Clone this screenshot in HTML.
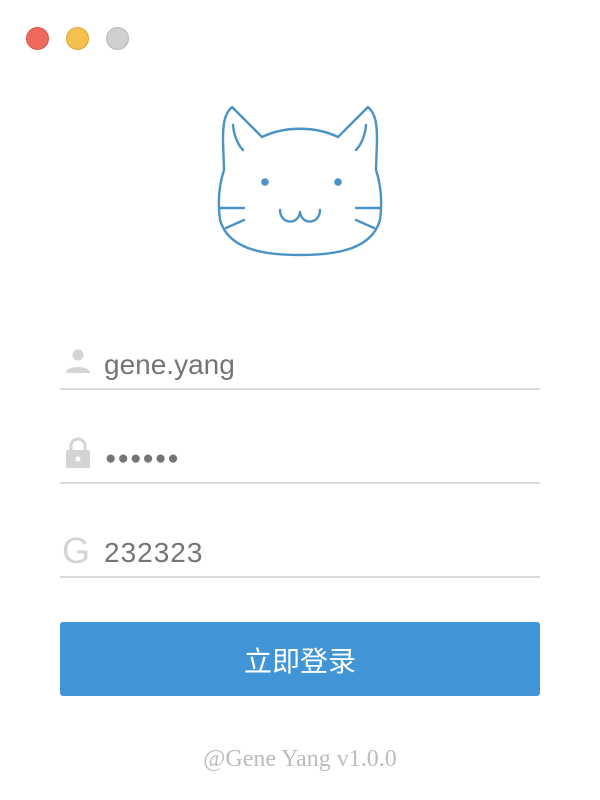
<!DOCTYPE html>
<html><head><meta charset="utf-8"><style>
html,body{margin:0;padding:0;background:#fff;}
body{width:600px;height:800px;position:relative;overflow:hidden;font-family:"Liberation Sans","Noto Sans CJK SC",sans-serif;}
.dot{position:absolute;top:27px;width:23px;height:23px;border-radius:50%;box-sizing:border-box;}
.field{position:absolute;left:60px;width:480px;border-bottom:2px solid #d9d9d9;height:40px;}
.field .t{position:absolute;left:44px;bottom:7px;font-size:28px;color:#757575;}
.btn{position:absolute;left:60px;top:622px;width:480px;height:74px;background:#4195d6;border-radius:3px;color:#fff;font-size:28px;text-align:center;line-height:80px;}
.foot{position:absolute;top:746px;width:600px;text-align:center;font-family:"Liberation Serif",serif;font-size:24px;color:#bcbcbc;}
</style></head><body>
<div class="dot" style="left:26px;background:#ee6a5f;border:1px solid #d65448"></div>
<div class="dot" style="left:66px;background:#f6c04f;border:1px solid #dca53a"></div>
<div class="dot" style="left:106px;background:#d0d0d0;border:1px solid #b9b9b9"></div>

<svg style="position:absolute;left:0;top:0" width="600" height="300" fill="none" stroke="#4a93c7" stroke-width="2.4" stroke-linecap="round" stroke-linejoin="round">
<path d="M262,137 L232,107 C224,114 223,125 223,140 L224,170 C218,188 218,205 220,220 C228,248 260,255 300,255 C340,255 372,248 380,220 C382,205 382,188 376,170 L377,140 C377,125 376,114 368,107 L338,137 C315,126 285,126 262,137 Z"/>
<path d="M233,125 C234,136 238,145 243,150"/>
<path d="M366,125 C365,136 361,145 356,150"/>
<path d="M220,208 L244,208 M226,228 L244,220"/>
<path d="M380,208 L356,208 M374,228 L356,220"/>
<path d="M280,210 C280,224 298,226 300,212 C302,226 320,224 320,210"/>
<circle cx="265" cy="182" r="3.8" fill="#4a93c7" stroke="none"/>
<circle cx="338" cy="182" r="3.8" fill="#4a93c7" stroke="none"/>
</svg>

<div class="field" style="top:348px">
<svg style="position:absolute;left:5px;top:1px" width="26" height="26"><circle cx="13" cy="6" r="5.5" fill="#d4d4d4"/><path d="M1,24 C1,16 25,16 25,24 Z" fill="#d4d4d4"/></svg>
<div class="t">gene.yang</div></div>

<div class="field" style="top:442px">
<svg style="position:absolute;left:5px;top:-6px" width="26" height="34"><path d="M6,14 V10 A7,7 0 0 1 20,10 V14" fill="none" stroke="#d4d4d4" stroke-width="3"/><rect x="1" y="14" width="24" height="18" rx="2" fill="#d4d4d4"/><circle cx="13" cy="23" r="2.5" fill="#fff"/></svg>
<div class="t" style="font-size:19px;letter-spacing:1px;bottom:12px;left:45px">●●●●●●</div></div>

<div class="field" style="top:536px">
<div style="position:absolute;left:2px;bottom:4px;font-size:36px;color:#d4d4d4">G</div>
<div class="t" style="letter-spacing:1px">232323</div></div>

<div class="btn">立即登录</div>
<div class="foot">@Gene Yang v1.0.0</div>
</body></html>
